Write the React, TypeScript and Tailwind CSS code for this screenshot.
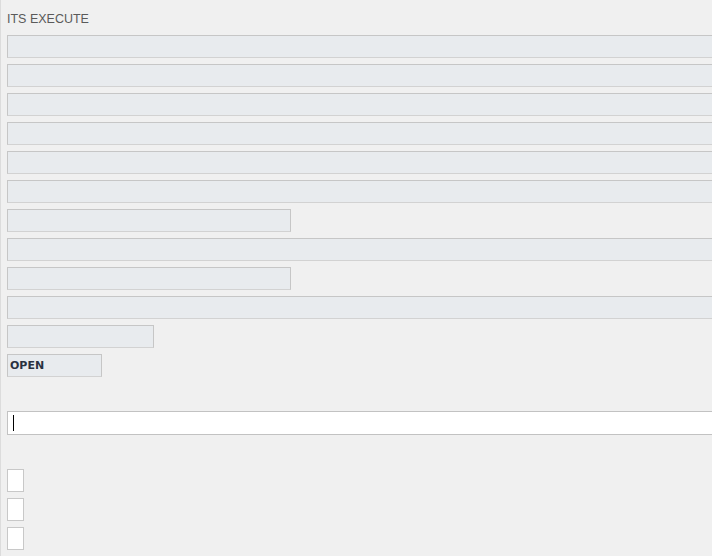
import React from 'react';

const rows: { w: string }[] = [
  { w: 'w-[760px]' },
  { w: 'w-[760px]' },
  { w: 'w-[760px]' },
  { w: 'w-[760px]' },
  { w: 'w-[760px]' },
  { w: 'w-[760px]' },
  { w: 'w-[284px]' },
  { w: 'w-[760px]' },
  { w: 'w-[284px]' },
  { w: 'w-[760px]' },
  { w: 'w-[147px]' },
];

const Field: React.FC<{ className?: string; children?: React.ReactNode }> = ({ className = '', children }) => (
  <div
    className={`h-[23px] shrink-0 border border-[#c6c6c6] border-b-[#d2d2d2] bg-[#e8ebee] ${className}`}
  >
    {children}
  </div>
);

export default function App() {
  return (
    <div className="w-[712px] h-[556px] overflow-hidden bg-[#f0f0f0] border-l border-[#dcdcdc] font-['Liberation_Sans',Arial,sans-serif]">
      <div className="pl-[6px] pt-[12px] flex flex-col">
        <div className="text-[12.5px] leading-[14px] text-[#5a5a5a]">ITS EXECUTE</div>

        <div className="mt-[9px] flex flex-col gap-[6px]">
          {rows.map((r, i) => (
            <Field key={i} className={r.w} />
          ))}
          <Field className="w-[95px] flex items-center pl-[2px]">
            <span className="text-[11px] font-bold text-[#2a3140] leading-none font-['DejaVu_Sans',sans-serif] text-[10px]">OPEN</span>
          </Field>
        </div>

        <div className="mt-[34px] h-[24px] w-[760px] border border-[#c2c2c2] bg-white flex items-center pl-[5px]">
          <div className="w-px h-[16px] bg-black" />
        </div>

        <div className="mt-[34px] flex flex-col gap-[6px]">
          {[0, 1, 2].map((i) => (
            <div key={i} className="w-[17px] h-[23px] border border-[#c8c8c8] bg-white" />
          ))}
        </div>
      </div>
    </div>
  );
}
